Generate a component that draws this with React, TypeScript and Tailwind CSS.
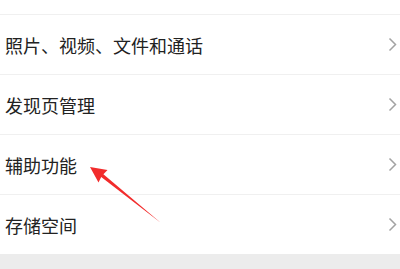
const items = ["照片、视频、文件和通话", "发现页管理", "辅助功能", "存储空间"];

function Chevron() {
  return (
    <svg width="9" height="15" viewBox="0 0 9 15" fill="none" className="shrink-0">
      <path d="M1.5 1.5 L7.5 7.5 L1.5 13.5" stroke="#a3a3a3" strokeWidth="1.5" />
    </svg>
  );
}

export default function App() {
  return (
    <div
      className="relative w-[400px] h-[269px] overflow-hidden bg-white"
      style={{ fontFamily: '"Noto Sans CJK SC", "Noto Sans", sans-serif' }}
    >
      <div className="h-[14px]" />
      {items.map((label) => (
        <div
          key={label}
          className="flex items-center justify-between h-[60px] border-t border-[#f0f0f0] pl-[5px] pr-[3px]"
        >
          <span className="text-[18px] leading-none text-[#222]">{label}</span>
          <Chevron />
        </div>
      ))}
      <div className="h-[15px] bg-[#ececec]" />

      {/* red annotation arrow */}
      <svg
        className="absolute left-0 top-0 pointer-events-none"
        width="400"
        height="269"
        viewBox="0 0 400 269"
      >
        <polygon
          points="90,167 107.5,170 103.4,174.3 161,223 101.2,177.1 98.5,182.5"
          fill="#f22c2c"
        />
      </svg>
    </div>
  );
}
